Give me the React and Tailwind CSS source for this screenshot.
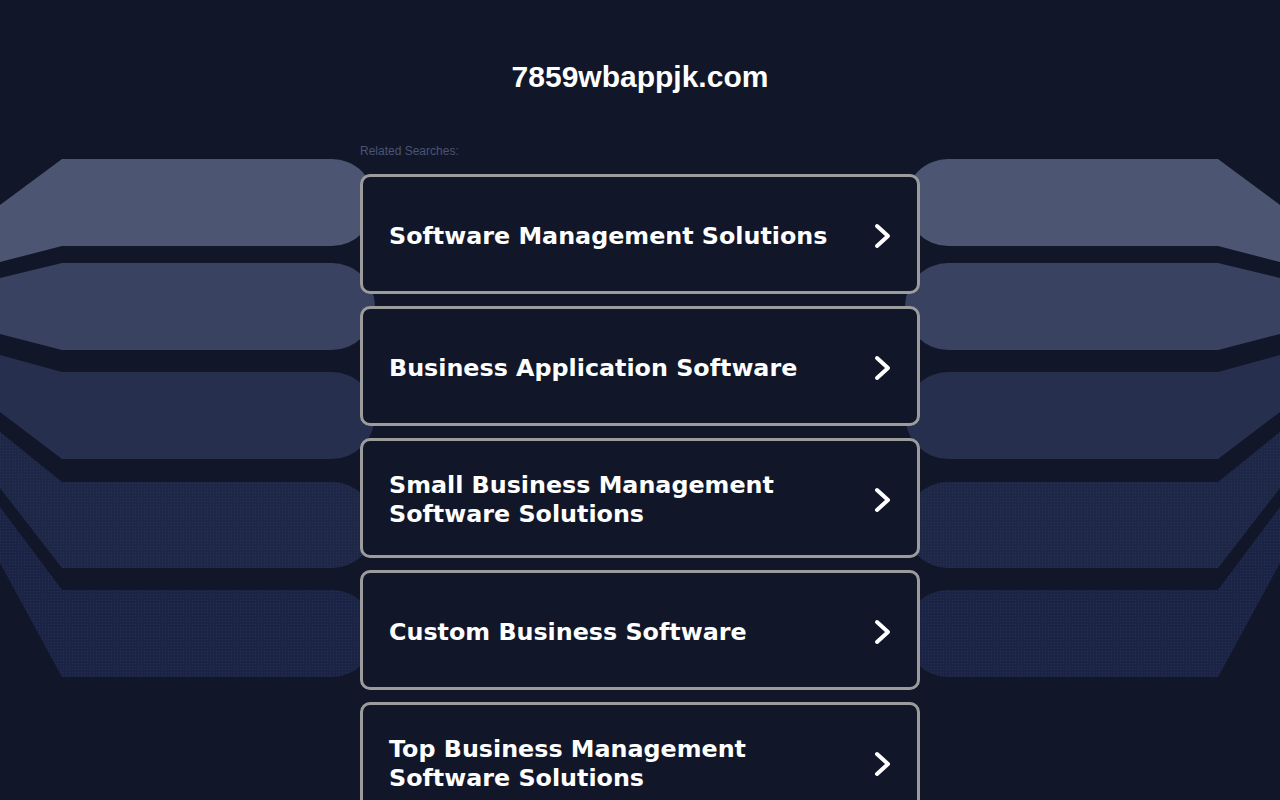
import React from 'react';

const bands = [
    { tl: 205, top: 159, bottom: 246, bl: 262, fill: '#4c5673' },
    { tl: 278, top: 263, bottom: 350, bl: 334, fill: '#394261' },
    { tl: 355, top: 372, bottom: 459, bl: 412, fill: '#272f4e' },
    { tl: 432, top: 482, bottom: 568, bl: 488, fill: 'url(#dots4)' },
    { tl: 507, top: 590, bottom: 677, bl: 563, fill: 'url(#dots5)' },
];

const bandPath = (b) => {
    const r = (b.bottom - b.top) / 2;
    const end = 375;
    return `M0,${b.tl} L62,${b.top} L${end - r},${b.top} A${r} ${r} 0 0 1 ${end - r},${b.bottom} L62,${b.bottom} L0,${b.bl} Z`;
};

const searches = [
    'Software Management Solutions',
    'Business Application Software',
    'Small Business Management Software Solutions',
    'Custom Business Software',
    'Top Business Management Software Solutions',
];

function Backdrop() {
    return (
        <svg className="absolute left-0 top-0 w-full h-[800px]" viewBox="0 0 1280 800" preserveAspectRatio="none">
            <defs>
                <pattern id="dots4" width="3" height="3" patternUnits="userSpaceOnUse">
                    <rect width="3" height="3" fill="#1e2746" />
                    <rect width="1" height="1" fill="#283257" />
                </pattern>
                <pattern id="dots5" width="3" height="3" patternUnits="userSpaceOnUse">
                    <rect width="3" height="3" fill="#1b2444" />
                    <rect width="1" height="1" fill="#263056" />
                </pattern>
            </defs>
            <g>
                {bands.map((b, i) => (
                    <path key={i} d={bandPath(b)} fill={b.fill} />
                ))}
            </g>
            <g transform="translate(1280,0) scale(-1,1)">
                {bands.map((b, i) => (
                    <path key={i} d={bandPath(b)} fill={b.fill} />
                ))}
            </g>
        </svg>
    );
}

function SearchCard({ label }) {
    return (
        <a
            href="#"
            className="flex items-center justify-between h-[120px] pl-[26px] pr-[24px] bg-[#111729] border-[3px] border-[#9c9c9c] rounded-[10px] text-white"
        >
            <span className="pt-[4px] text-[23.8px] leading-[29px] font-bold pr-8 [font-family:'DejaVu_Sans',Verdana,sans-serif]">
                {label}
            </span>
            <svg width="20" height="28" viewBox="0 0 20 28" className="shrink-0 mt-[3px]">
                <polyline
                    points="4,4 15,14 4,24"
                    fill="none"
                    stroke="#ffffff"
                    strokeWidth="4"
                    strokeLinecap="round"
                    strokeLinejoin="round"
                />
            </svg>
        </a>
    );
}

export default function App() {
    return (
        <div className="relative min-h-screen overflow-hidden bg-[#111729] [font-family:'Liberation_Sans',Arial,sans-serif]">
            <Backdrop />
            <div className="relative w-[560px] mx-auto pt-[59px]">
                <h1 className="text-center text-white text-[30px] leading-[36px] font-bold">7859wbappjk.com</h1>
                <div className="mt-[49px] text-[12px] leading-[14px] text-[#4a5474]">Related Searches:</div>
                <div className="mt-[16px] flex flex-col gap-[12px]">
                    {searches.map((s) => (
                        <SearchCard key={s} label={s} />
                    ))}
                </div>
            </div>
        </div>
    );
}
